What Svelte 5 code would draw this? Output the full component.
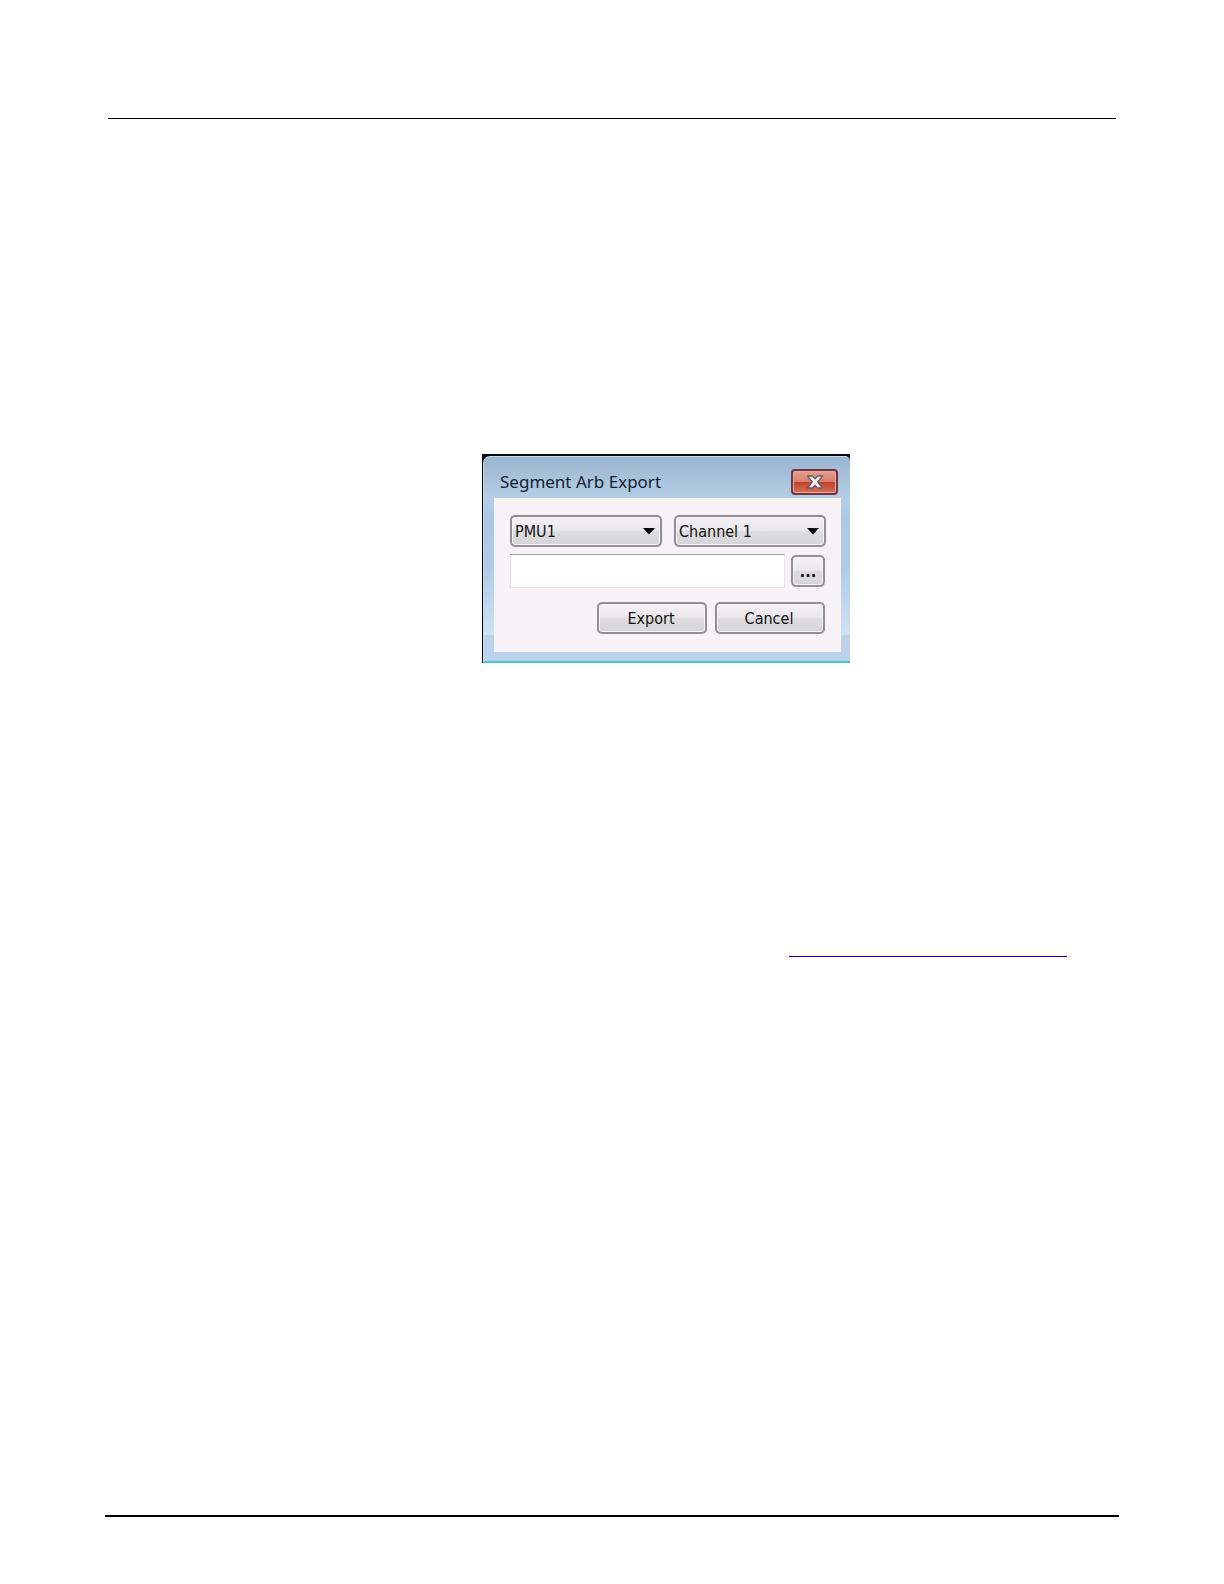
<script lang="ts">
  const units = ['PMU1', 'PMU2', 'PMU3', 'PMU4'];
  const channels = ['Channel 1', 'Channel 2'];

  let unit: string = $state(units[0]);
  let channel: string = $state(channels[0]);
  let fileName: string = $state('');
</script>

<div class="page">
  <header></header>

  <main>
    <div class="dialog" role="dialog" aria-labelledby="dialog-title">
      <div class="frame">
        <div class="titlebar">
          <h1 id="dialog-title">Segment Arb Export</h1>
          <button class="close" type="button" aria-label="Close">
            <svg width="18" height="16" viewBox="0 0 18 16" aria-hidden="true">
              <path
                d="M1.500 2H6.500L9 4.800 11.500 2h5L11.800 8l4.700 6h-5L9 11.200 6.500 14h-5L6.200 8z"
                fill="#f4f4f4"
                stroke="#6f5b69"
                stroke-width="1.300"
                stroke-linejoin="round"
              />
            </svg>
          </button>
        </div>

        <form class="client" onsubmit={(e) => e.preventDefault()}>
          <div class="row selects">
            <div class="combo">
              <select bind:value={unit} aria-label="PMU">
                {#each units as name (name)}
                  <option value={name}>{name}</option>
                {/each}
              </select>
              <svg width="12" height="8" viewBox="0 0 12 8" aria-hidden="true"><path d="M0 1h12L6 7.500z" /></svg>
            </div>
            <div class="combo">
              <select bind:value={channel} aria-label="Channel">
                {#each channels as name (name)}
                  <option value={name}>{name}</option>
                {/each}
              </select>
              <svg width="12" height="8" viewBox="0 0 12 8" aria-hidden="true"><path d="M0 1h12L6 7.500z" /></svg>
            </div>
          </div>

          <div class="row file">
            <input type="text" bind:value={fileName} aria-label="Export file" />
            <button class="btn browse" type="button" aria-label="Browse">...</button>
          </div>

          <div class="row actions">
            <button class="btn" type="submit">Export</button>
            <button class="btn" type="button">Cancel</button>
          </div>
        </form>
      </div>
    </div>

    <a class="reference" href="#reference" aria-label="Reference"></a>
  </main>

  <footer></footer>
</div>

<style>
  :global(body) {
    margin: 0;
    background: #fff;
  }

  .page {
    display: flex;
    flex-direction: column;
    box-sizing: border-box;
    min-height: 100vh;
    padding: 118px 105px 67px;
    font-family: "DejaVu Sans Condensed", "DejaVu Sans", sans-serif;
  }

  header {
    margin: 0 3px;
    border-top: 1px solid #000;
  }
  footer {
    margin-top: auto;
    border-top: 2px solid #000;
  }

  main {
    display: flex;
    flex-direction: column;
    align-items: center;
    padding: 335px 3px 0 111px;
  }

  /* Dialog window */
  .dialog {
    box-sizing: border-box;
    width: 368px;
    max-width: 100%;
    padding: 2px 0 0 1px;
    background: #05070b;
  }
  .frame {
    padding: 0 9px 9px 10px;
    border-left: 1px solid #c3e2ee;
    border-top: 1px solid #c5dcea;
    border-bottom: 2px solid #48c4d4;
    border-radius: 7px 5px 0 0;
    background:
      linear-gradient(#bdd0ec, #bdd0ec) bottom / 100% 26px no-repeat,
      linear-gradient(#9bb5d0, #b5cee8 42px, #acc9e6 60px, #aecbe8 110px, #cfe2f6 180px);
  }

  .titlebar {
    display: flex;
    align-items: flex-end;
    justify-content: space-between;
    height: 38px;
    padding: 0 3px 3px 6px;
  }
  h1 {
    margin: 0;
    font-family: "Noto Sans", "Open Sans", sans-serif;
    font-size: 17px;
    font-weight: 400;
    line-height: 26px;
    color: #14202f;
  }

  .close {
    display: flex;
    align-items: center;
    justify-content: center;
    width: 47px;
    height: 26px;
    padding: 0;
    border: 2px solid #74343f;
    border-radius: 4px;
    background: linear-gradient(#e5a091, #d97e6c 48%, #bf4129 50%, #d5705a);
    box-shadow: inset 0 0 0 1px #e9a99b;
  }

  .client {
    padding: 17px 15px 18px 16px;
    background: #f7f2f6;
  }
  .row {
    display: flex;
  }

  .selects { gap: 12px; }
  .combo {
    display: grid;
    flex: 1;
    align-items: center;
  }
  .combo > * { grid-area: 1 / 1; }
  .combo svg {
    justify-self: end;
    margin-right: 7px;
    pointer-events: none;
  }

  select,
  .btn {
    box-sizing: border-box;
    height: 32px;
    border: 2px solid #918f93;
    border-radius: 5px;
    background: linear-gradient(#f3f1f3, #eae8ea 48%, #dddcde 52%, #d4d3d5);
    box-shadow: inset 0 0 0 1px #f6f5f6;
    font-family: inherit;
    font-size: 16px;
    line-height: 24px;
    color: #111;
  }
  select {
    appearance: none;
    width: 100%;
    padding: 2px 24px 0 3px;
  }

  .file,
  .actions { padding-right: 1px; }
  .file {
    align-items: center;
    gap: 6px;
    margin-top: 7px;
  }
  input {
    box-sizing: border-box;
    flex: 1;
    min-width: 0;
    height: 34px;
    padding: 0 4px;
    border: 1px solid #e6e2e8;
    border-top-color: #a5a3a9;
    background: #fff;
    font-family: inherit;
    font-size: 16px;
  }

  .actions {
    justify-content: flex-end;
    gap: 8px;
    margin-top: 14px;
  }
  .btn {
    width: 110px;
    padding: 2px 2px 0 0;
  }
  .browse {
    width: 34px;
    padding: 2px 0 0;
    font-weight: 700;
  }

  .reference {
    align-self: flex-end;
    width: 278px;
    height: 293px;
    margin-right: 49px;
    border-bottom: 1px solid #1100c4;
  }
</style>
